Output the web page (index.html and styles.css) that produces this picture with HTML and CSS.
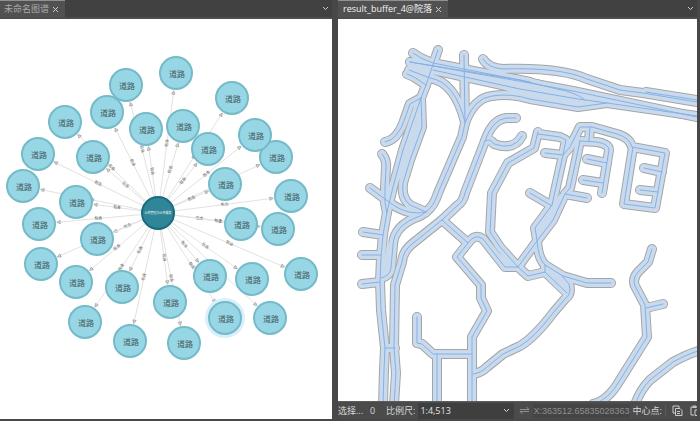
FILE: index.html
```
<!DOCTYPE html>
<html lang="zh">
<head>
  <meta charset="utf-8">
  <title>result_buffer_4@院落</title>
  <link rel="stylesheet" href="styles.css">
</head>
<body>
  <div class="workspace">

    <section class="pane graph-pane">
      <div class="tab-bar">
        <div class="tab">
          <span>未命名图谱</span>
          <button type="button" class="icon-button" aria-label="关闭">
            <svg width="7" height="7" viewBox="0 0 7 7"><path d="M1 1l5 5M6 1l-5 5"/></svg>
          </button>
        </div>
        <button type="button" class="icon-button" aria-label="更多">
          <svg width="7" height="7" viewBox="0 0 7 7"><path d="M1 2l2.5 2.5L6 2"/></svg>
        </button>
      </div>
      <div class="view">
        <svg id="graph" class="graph" viewBox="0 19 332 400" preserveAspectRatio="xMinYMin meet">
          <defs>
            <marker id="arrow" viewBox="0 0 6 6" refX="5" refY="3" markerWidth="5" markerHeight="5" orient="auto">
              <path class="arrow" d="M1 1l4 2l-4 2z"/>
            </marker>
          </defs>
        </svg>
      </div>
    </section>

    <section class="pane map-pane">
      <div class="tab-bar">
        <div class="tab active">
          <span>result_buffer_4@院落</span>
          <button type="button" class="icon-button" aria-label="关闭">
            <svg width="7" height="7" viewBox="0 0 7 7"><path d="M1 1l5 5M6 1l-5 5"/></svg>
          </button>
        </div>
        <button type="button" class="icon-button" aria-label="更多">
          <svg width="7" height="7" viewBox="0 0 7 7"><path d="M1 2l2.5 2.5L6 2"/></svg>
        </button>
      </div>
      <div class="view">
        <svg class="map" viewBox="338 19 359 382" preserveAspectRatio="xMinYMin slice">
          <defs>
            <g id="roads">
              <!-- west side -->
              <path d="M438 50L426 85L421 98L403 150L393 187L387 212L383 235L381 257L380 282L381 310L385 348L384 370L383 405"/>
              <path d="M421 98L422 127L410 160L403 183Q401 198 410 205L426 212"/>
              <path d="M421 98L410 104L405 118Q398 140 385 142"/>
              <path d="M382 154Q387 160 386 168L385 187L385 203L387 213"/>
              <path d="M370 188L393 205Q410 216 426 212"/>
              <path d="M464 55L465 123L462 137L438 193Q434 206 426 212L420 216Q394 225 393 245L391 268Q390 276 381 278"/>
              <path d="M363 232L383 235M362 255L381 255M362 284L380 282M385 348L395 348"/>
              <!-- main road -->
              <path d="M413 53Q421 59 433 63L530 82"/>
              <path d="M410 62L520 80L557 89Q575 92 585 100"/>
              <path d="M410 62L530 83L573 91L697 117"/>
              <path d="M407 74L414 77L426 85"/>
              <path d="M409 70L430 78Q455 82 465 122"/>
              <path d="M433 70L520 89L578 99L607 103L697 116"/>
              <path d="M465 123Q474 98 492 96Q510 93 530 99L578 107L607 103"/>
              <path d="M483 59Q488 68 503 69Q560 67 587 79L620 90L643 93L697 102"/>
              <path d="M646 92L697 100"/>
              <!-- middle -->
              <path d="M516 118L506 118Q492 120 485 141L465 193Q463 202 458 205L442 220L412 244Q403 251 402 262L395 285L394 348L396 373L394 405"/>
              <path d="M485 141Q490 138 494 144Q514 151 522 136"/>
              <path d="M538 132L534 148L508 163L492 193L490 232L500 247L518 267"/>
              <path d="M442 220L468 243L457 257L481 285L481 298L487 311L472 337L472 405"/>
              <path d="M468 243Q475 233 483 239L505 267L518 267L528 276L545 272L567 293"/>
              <path d="M417 317L417 343L422 344L433 354L472 354M437 354L437 405"/>
              <path d="M473 374Q481 373 487 367L503 354L520 346Q535 337 553 313L565 299Q572 294 569 284L562 276"/>
              <!-- houses -->
              <path d="M538 134L560 137L566 140L563 155L552 205L535 228L537 240Q538 258 545 265L563 276L587 283L611 283"/>
              <path d="M545 265L545 272"/>
              <path d="M563 155L570 147L580 127L592 127L617 134Q630 138 632 147L665 153L655 208L624 204L633 147"/>
              <path d="M590 127L589 141M580 141L597 142Q609 144 609 150L602 193"/>
              <path d="M580 141L570 188L565 194L553 220L537 241L518 267"/>
              <path d="M545 153L563 155M587 159L607 163M583 180L603 183M644 168L662 172M640 190L658 192M530 193L552 206M565 194L587 198"/>
              <!-- south east -->
              <path d="M652 249L648 262L638 272Q632 279 635 286L645 305L647 337L620 380Q608 401 593 404"/>
              <path d="M646 308L663 304"/>
              <path d="M698 351Q688 354 673 362L650 380Q640 390 635 405"/>
            </g>
          </defs>
          <use href="#roads" class="buffer-edge"/>
          <use href="#roads" class="buffer"/>
          <path class="buffer-fill" d="M421 98L422 127L410 160L401 178L393 187L403 150zM387 244L393 240L390 273L381 278zM433 63L557 89L585 100L607 103L578 107L530 99L500 88L433 70zM413 55L433 63L430 78L410 70zM498 252L518 267L505 267zM545 268L562 276L569 284L567 293zM560 194L565 194L553 220L537 240L535 228z"/>
          <use href="#roads" class="road"/>
        </svg>
      </div>

      <form class="status-bar">
        <span class="selection">选择...</span>
        <span class="count">0</span>
        <label for="scale">比例尺:</label>
        <div class="combo">
          <select id="scale">
            <option>1:4,513</option>
            <option>1:10,000</option>
          </select>
          <svg width="7" height="7" viewBox="0 0 7 7"><path d="M1 2l2.5 2.5L6 2"/></svg>
        </div>
        <button type="button" class="icon-button swap" aria-label="切换">
          <svg width="11" height="9" viewBox="0 0 11 9"><path d="M1 3.5h9L7.500 1M10 5.500H1L3.500 8"/></svg>
        </button>
        <input class="coord" type="text" aria-label="坐标" value="X:363512.65835028363" readonly>
        <label for="copy">中心点:</label>
        <div class="tools">
          <button type="button" id="copy" class="icon-button" aria-label="复制">
            <svg width="11" height="11" viewBox="0 0 11 11"><path d="M3 8H1V1h6v2M3.500 3.500h4.500l2 2v5H3.500zM5 6.500h3M5 8.500h3"/></svg>
          </button>
          <button type="button" class="icon-button" aria-label="粘贴">
            <svg width="11" height="11" viewBox="0 0 11 11"><path d="M4 10H1V2h7v2M3 2V1h3v1.500H3zM5 5h3l2 2v3.500H5z"/></svg>
          </button>
        </div>
      </form>
    </section>

  </div>
  <script src="graph.js"></script>
</body>
</html>
```
FILE: styles.css
```
* {
  box-sizing: border-box;
}

body {
  margin: 0;
  background: #484848;
  color: #d8d8d8;
  font-family: "Open Sans", "Noto Sans CJK SC", sans-serif;
  font-size: 9px;
  line-height: 12px;
}

.workspace {
  display: flex;
  gap: 6px;
  height: 100vh;
  padding: 0 3px 2px 0;
}

.pane {
  display: flex;
  flex-direction: column;
  min-width: 0;
}

.graph-pane {
  flex: 332;
}

.map-pane {
  flex: 359;
  overflow: hidden;
}

/* tabs */
.tab-bar {
  display: flex;
  flex: none;
  justify-content: space-between;
  align-items: center;
  height: 19px;
  padding-right: 3px;
  background: #414141;
  border-bottom: 2px solid #4d4d4d;
}

.tab {
  display: flex;
  align-items: center;
  gap: 3px;
  height: 17px;
  padding: 0 6px 0 4px;
  background: #515151;
  border-top: 1px solid #8d9290;
  color: #a9a9a9;
}

.tab.active {
  padding-left: 5px;
  color: #f4f4f4;
}

.icon-button {
  display: flex;
  flex: none;
  padding: 0;
  background: none;
  border: none;
  color: #cccccc;
}

.icon-button svg,
.combo svg {
  fill: none;
  stroke: currentColor;
}

.view {
  flex: 1;
  min-height: 0;
  overflow: hidden;
  background: #ffffff;
}

.graph,
.map {
  display: block;
  width: 100%;
  height: 100%;
}

/* knowledge graph */
.edge {
  stroke: #e2e2e2;
  stroke-width: 1;
}

.arrow {
  fill: #dddddd;
  stroke: #a8a8a8;
  stroke-width: 1;
}

.edge-label {
  fill: #555555;
  font-size: 4px;
  text-anchor: middle;
}

.node {
  fill: #97d7e5;
  stroke: #74bac8;
  stroke-width: 2;
}

.node-label {
  fill: #46585e;
  font-size: 8px;
  text-anchor: middle;
}

.halo {
  fill: #daeffc;
}

.root {
  fill: #2f8699;
  stroke: #1b6b7e;
  stroke-width: 2;
}

.root-label {
  fill: #ffffff;
  font-size: 3px;
  text-anchor: middle;
}

/* map */
.buffer-edge,
.buffer,
.road {
  fill: none;
  stroke-linecap: round;
  stroke-linejoin: round;
}

.buffer-edge {
  stroke: #a3a6a9;
  stroke-width: 10;
}

.buffer {
  stroke: #cadaed;
  stroke-width: 8;
}

.buffer-fill {
  fill: #cadaed;
}

.road {
  stroke: #85b0e6;
  stroke-width: 1;
}

/* status bar */
.status-bar {
  display: flex;
  flex: none;
  align-items: center;
  height: 18px;
  border-top: 1px solid #5c5c5c;
  background: #4b4b4b;
  overflow: hidden;
  white-space: nowrap;
}

.status-bar > * {
  flex: none;
}

.selection {
  width: 32px;
}

.count {
  width: 16px;
}

.combo {
  display: flex;
  align-items: center;
  width: 96px;
  height: 16px;
  margin-left: 3px;
  padding-right: 4px;
  background: #3f3f3f;
}

.combo select {
  flex: 1;
  appearance: none;
  padding: 0 2px;
  background: none;
  border: none;
  color: #e4e4e4;
  font: inherit;
}

.swap {
  margin: 0 3px 0 5px;
  color: #8f8f8f;
}

.coord {
  width: 97px;
  height: 14px;
  margin-right: 2px;
  padding: 0;
  background: #454545;
  border: none;
  color: #8f8f8f;
  font-family: "Liberation Sans", sans-serif;
  font-size: 9px;
}

.tools {
  display: flex;
  gap: 7px;
  margin-left: 3px;
  padding-left: 6px;
  border-left: 1px solid #5c5c5c;
}
```
FILE: graph.js
```
var root = { x: 158, y: 213 };
var nodes = [
  [126, 85], [107, 112], [146, 129], [65, 122], [38, 154], [93, 157], [23, 186], [76, 202],
  [39, 224], [97, 239], [41, 264], [76, 282], [122, 287], [85, 322], [130, 341], [170, 302],
  [184, 343], [210, 276], [225, 318], [252, 279], [270, 318], [301, 274], [241, 224], [278, 229],
  [176, 73], [232, 98], [183, 126], [208, 149], [276, 157], [255, 135], [225, 184], [291, 196]
];
var selected = 18;
var graph = document.getElementById('graph');

function add(tag, attrs, text) {
  var el = document.createElementNS('http://www.w3.org/2000/svg', tag);
  for (var name in attrs) {
    el.setAttribute(name, attrs[name]);
  }
  if (text) {
    el.textContent = text;
  }
  graph.appendChild(el);
}

// edges stop a little before the node so the arrow stays visible
nodes.forEach(function(n) {
  var dx = n[0] - root.x;
  var dy = n[1] - root.y;
  var len = Math.sqrt(dx * dx + dy * dy);
  var t = (len - 18) / len;
  add('line', { 'class': 'edge', x1: root.x, y1: root.y, x2: root.x + dx * t, y2: root.y + dy * t, 'marker-end': 'url(#arrow)' });

  var angle = Math.atan2(dy, dx) * 180 / Math.PI;
  if (angle > 90) angle -= 180;
  if (angle < -90) angle += 180;
  var mx = root.x + dx / 2;
  var my = root.y + dy / 2;
  add('text', { 'class': 'edge-label', x: mx, y: my + 1, transform: 'rotate(' + angle + ' ' + mx + ' ' + my + ')' }, '包含');
});

nodes.forEach(function(n, i) {
  if (i === selected) {
    add('circle', { 'class': 'halo', cx: n[0], cy: n[1], r: 20 });
  }
  add('circle', { 'class': 'node', cx: n[0], cy: n[1], r: 16 });
  add('text', { 'class': 'node-label', x: n[0] + 1, y: n[1] + 4 }, '道路');
});

add('circle', { 'class': 'root', cx: root.x, cy: root.y, r: 16 });
add('text', { 'class': 'root-label', x: root.x, y: root.y + 1 }, '公共管理与公共服务');
```
